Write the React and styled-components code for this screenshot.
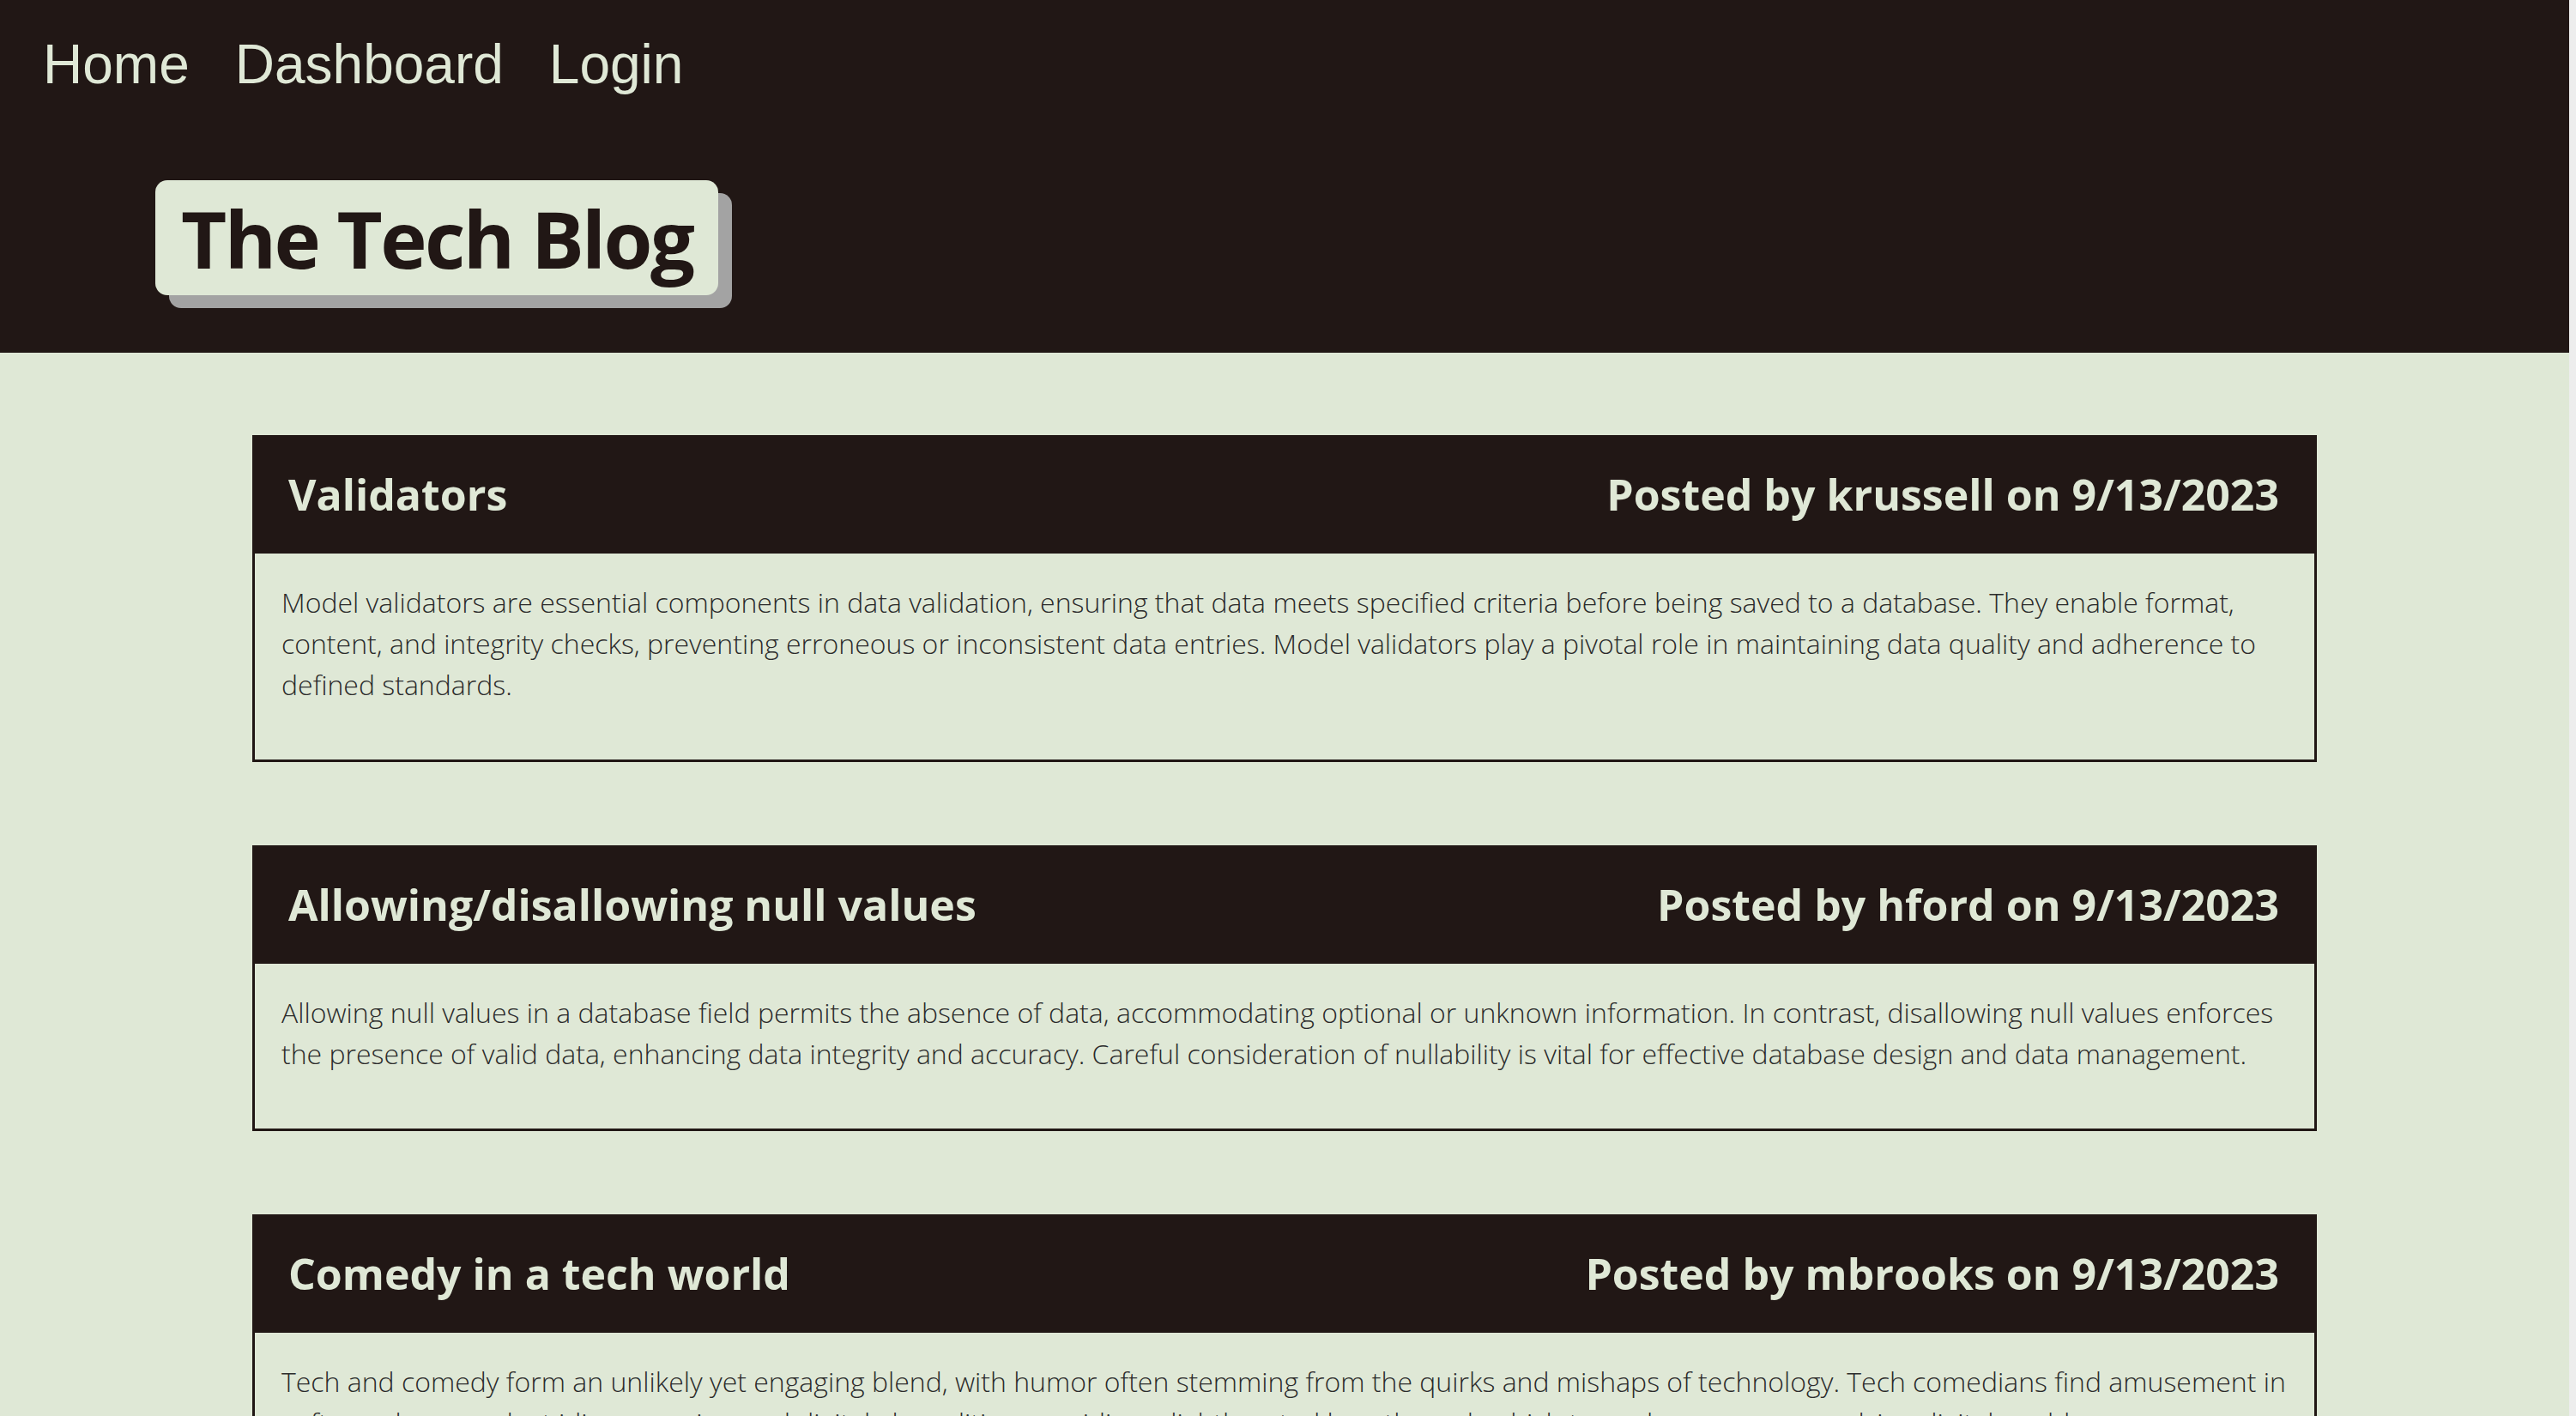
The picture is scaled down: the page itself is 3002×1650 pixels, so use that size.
import React from "react";
import styled, { createGlobalStyle } from "styled-components";

const DARK = "#211715";
const LIGHT = "#dfe8d6";

const GlobalStyle = createGlobalStyle`
  html, body {
    margin: 0;
    padding: 0;
    overflow: hidden;
    background: #ededed;
  }
  body {
    font-family: "Open Sans", "Noto Sans", sans-serif;
  }
`;

const Page = styled.div`
  margin-right: 8px;
  min-height: 100vh;
  background: ${LIGHT};
`;

const Header = styled.header`
  background: ${DARK};
  padding: 38px 0 67px;
`;

const Nav = styled.nav`
  display: flex;
  gap: 53px;
  padding-left: 50px;
`;

const NavLink = styled.a`
  font-family: "Liberation Sans", Arial, sans-serif;
  font-size: 64px;
  line-height: 74px;
  color: ${LIGHT};
  text-decoration: none;
`;

const TitleRow = styled.div`
  padding: 98px 0 0 181px;
`;

const Title = styled.h1`
  display: inline-block;
  margin: 0;
  padding: 5px 30px 4px;
  background: ${LIGHT};
  color: ${DARK};
  border-radius: 14px;
  box-shadow: 16px 15px 0 #a3a3a3;
  font-family: "Open Sans", sans-serif;
  font-weight: 700;
  font-size: 92px;
  line-height: 125px;
  letter-spacing: -2.6px;
`;

const Main = styled.main`
  display: flex;
  flex-direction: column;
  align-items: center;
  gap: 97px;
  padding-top: 96px;
`;

const Card = styled.article`
  width: 2406px;
`;

const CardHead = styled.div`
  display: flex;
  justify-content: space-between;
  align-items: center;
  height: 138px;
  padding: 0 44px 0 42px;
  background: ${DARK};
  color: ${LIGHT};
  font-family: "Open Sans", sans-serif;
  font-weight: 700;
  font-size: 50px;
`;

const CardBody = styled.div`
  border: 3px solid ${DARK};
  border-top: none;
  padding: 33px 31px 63px;
  font-family: "Open Sans", sans-serif;
  font-weight: 300;
  font-size: 32px;
  line-height: 48px;
  color: #2b2b2b;
`;

const posts = [
  {
    title: "Validators",
    author: "krussell",
    date: "9/13/2023",
    body: "Model validators are essential components in data validation, ensuring that data meets specified criteria before being saved to a database. They enable format, content, and integrity checks, preventing erroneous or inconsistent data entries. Model validators play a pivotal role in maintaining data quality and adherence to defined standards.",
  },
  {
    title: "Allowing/disallowing null values",
    author: "hford",
    date: "9/13/2023",
    body: "Allowing null values in a database field permits the absence of data, accommodating optional or unknown information. In contrast, disallowing null values enforces the presence of valid data, enhancing data integrity and accuracy. Careful consideration of nullability is vital for effective database design and data management.",
  },
  {
    title: "Comedy in a tech world",
    author: "mbrooks",
    date: "9/13/2023",
    body: "Tech and comedy form an unlikely yet engaging blend, with humor often stemming from the quirks and mishaps of technology. Tech comedians find amusement in software bugs, gadget idiosyncrasies, and digital absurdities, providing a lighthearted lens through which to explore our ever-evolving digital world.",
  },
];

export default function App() {
  return (
    <>
      <GlobalStyle />
      <Page>
        <Header>
          <Nav>
            <NavLink href="#">Home</NavLink>
            <NavLink href="#">Dashboard</NavLink>
            <NavLink href="#">Login</NavLink>
          </Nav>
          <TitleRow>
            <Title>The Tech Blog</Title>
          </TitleRow>
        </Header>
        <Main>
          {posts.map((p) => (
            <Card key={p.title}>
              <CardHead>
                <span>{p.title}</span>
                <span>
                  Posted by {p.author} on {p.date}
                </span>
              </CardHead>
              <CardBody>{p.body}</CardBody>
            </Card>
          ))}
        </Main>
      </Page>
    </>
  );
}
